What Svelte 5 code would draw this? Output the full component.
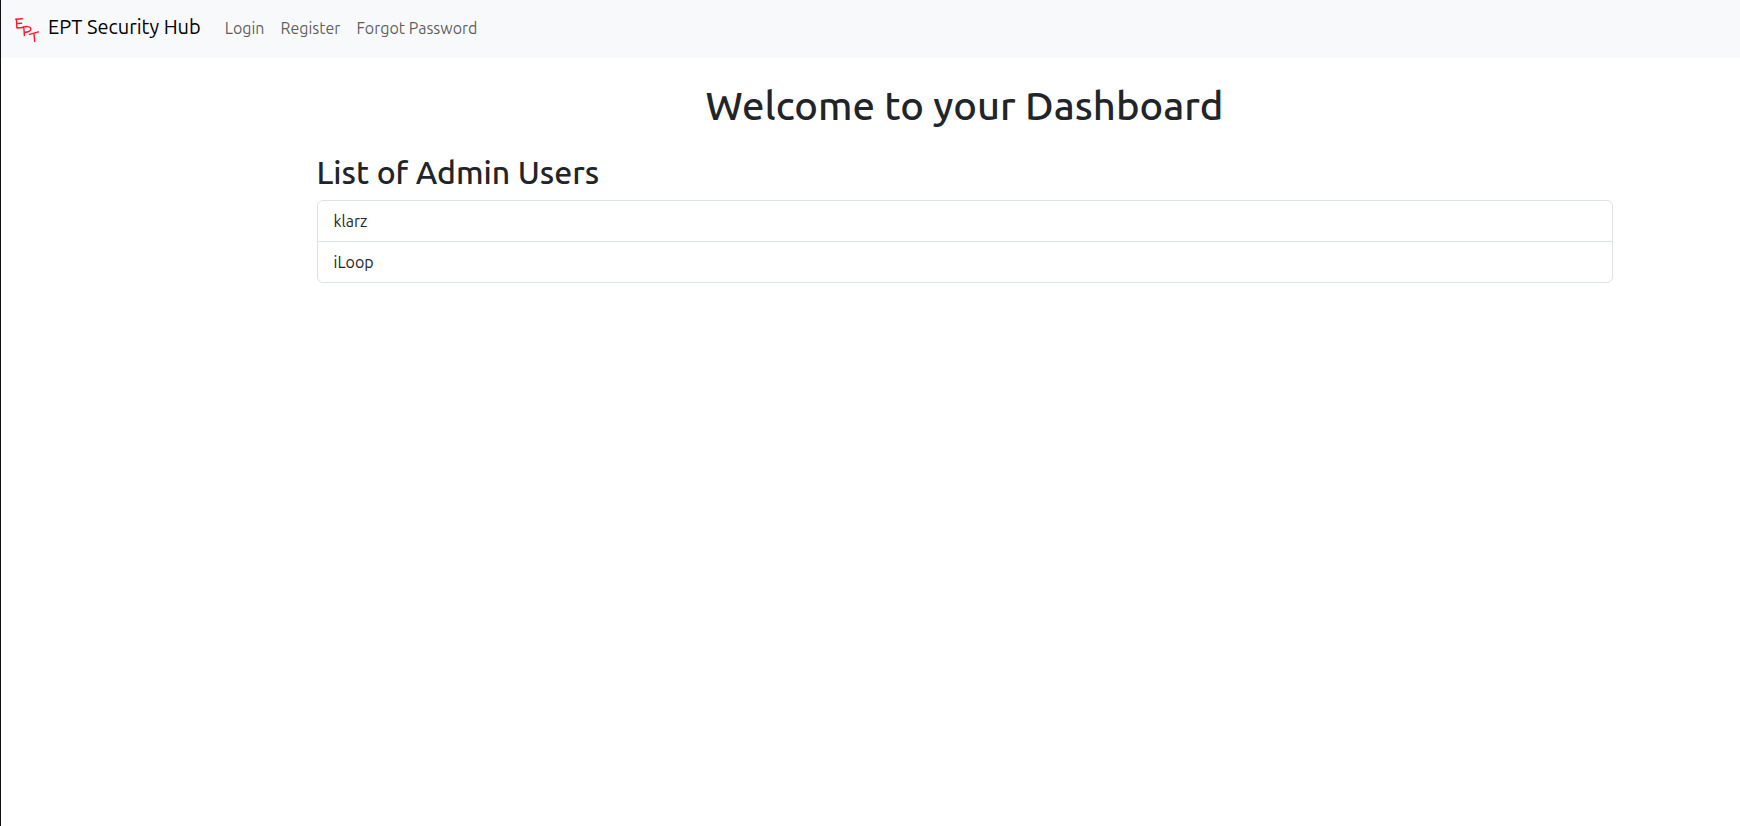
<script>
  const links = ['Login', 'Register', 'Forgot Password'];
  const admins = ['klarz', 'iLoop'];
</script>

<div class="page">
  <nav class="navbar" aria-label="Main">
    <a class="brand" href="#home">
      <svg class="logo" viewBox="0 0 24 24" aria-hidden="true">
        <g fill="none" stroke="#ff1a2b" stroke-width="1.4" stroke-linecap="round" stroke-linejoin="round">
          <path d="M0.7 1.2 L7.4 0.8 M1.4 1 L1.9 10 L8.2 9.5 M1.7 5.5 L6.6 5.3" />
          <path d="M8.8 9 L9.4 17.6 M7.9 9.1 C11 8 15.6 8.4 15.9 10.8 C16 13.2 12.6 14.2 9.2 14.5" />
          <path d="M14.4 16.4 L23.6 13.8 M19 15.4 L19.7 23.4" />
        </g>
      </svg>
      <span>EPT Security Hub</span>
    </a>
    <ul class="links">
      {#each links as link}
        <li><a href="#{link.toLowerCase().replace(' ', '-')}">{link}</a></li>
      {/each}
    </ul>
  </nav>

  <main>
    <h1>Welcome to your Dashboard</h1>
    <h2>List of Admin Users</h2>
    <ul class="list">
      {#each admins as name}
        <li>{name}</li>
      {/each}
    </ul>
  </main>
</div>

<style>
  :global(body) {
    margin: 0;
    background: #fff;
  }

  .page {
    box-sizing: border-box;
    min-height: 100vh;
    border-left: 1px solid #111115;
    font-family: Ubuntu, 'Noto Sans', sans-serif;
    font-size: 16px;
    line-height: 24px;
    color: #212529;
  }

  .navbar {
    display: flex;
    align-items: center;
    padding: 7px 14px 9px;
    background: #f8f9fa;
  }

  .brand {
    display: flex;
    align-items: center;
    gap: 9px;
    margin-right: 16px;
    padding: 6px 0;
    font-size: 20px;
    line-height: 30px;
    color: #000;
    text-decoration: none;
  }

  .brand span {
    padding-bottom: 2px;
    line-height: 28px;
  }

  .logo {
    display: block;
    width: 24px;
    height: 24px;
    margin-top: 4px;
  }

  ul {
    margin: 0;
    padding: 0;
    list-style: none;
  }

  .links {
    display: flex;
  }

  .links a {
    display: block;
    padding: 8px;
    color: rgba(0, 0, 0, 0.65);
    text-decoration: none;
  }

  main {
    box-sizing: border-box;
    max-width: 1320px;
    margin: 24px auto 0;
    padding: 0 12px;
  }

  @media (min-width: 1600px) {
    main {
      margin-left: calc(50% + 94px - 660px);
    }
  }

  h1,
  h2 {
    margin: 0;
    font-weight: 500;
  }

  h1 {
    margin-bottom: 23px;
    font-size: 40px;
    line-height: 48px;
    text-align: center;
  }

  h2 {
    margin-bottom: 9px;
    font-size: 32px;
    line-height: 38px;
  }

  .list {
    border: 1px solid #dee2e6;
    border-radius: 6px;
  }

  .list li {
    padding: 8px 16px;
  }

  .list li + li {
    border-top: 1px solid #dee2e6;
  }
</style>
